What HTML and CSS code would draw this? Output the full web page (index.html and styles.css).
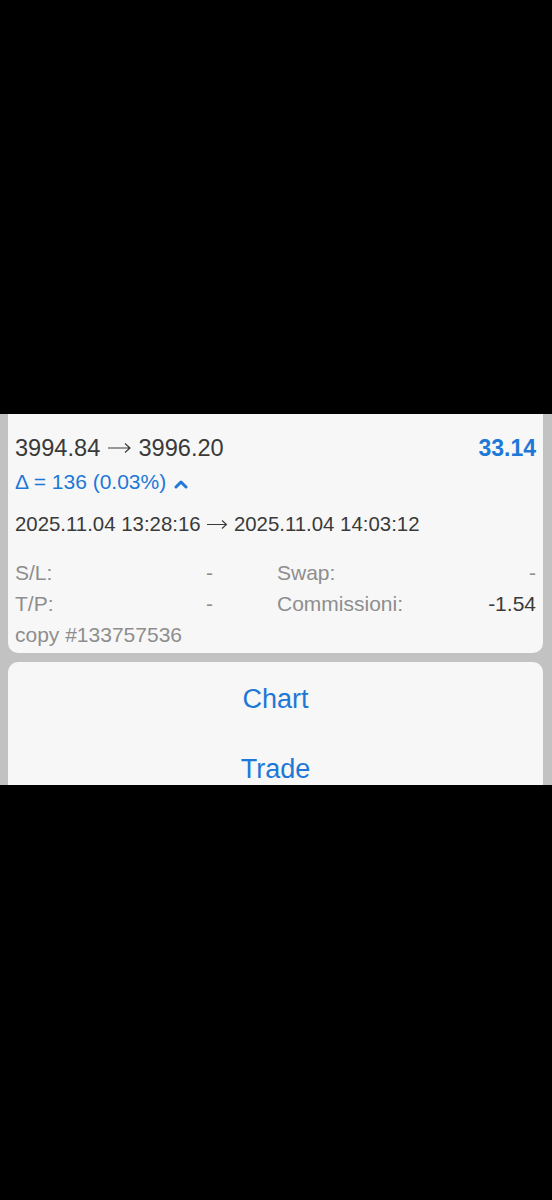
FILE: index.html
```html
<!DOCTYPE html>
<html lang="it">
<head>
    <meta charset="UTF-8">
    <meta name="viewport" content="width=device-width, initial-scale=1.0">
    <title>Posizione</title>
    <link rel="stylesheet" href="styles.css">
</head>
<body>
    <div class="top-space"></div>

    <div class="sheet">
        <!-- dettagli della posizione -->
        <div class="card details">
            <div class="row-price">
                <span class="prices">3994.84
                    <svg class="arrow" width="25" height="12" viewBox="0 0 25 12">
                        <path d="M1 6H23M18 1.5L23 6L18 10.5" fill="none" stroke="#3a3a3a" stroke-width="1.2"/>
                    </svg>
                    3996.20</span>
                <span class="profit">33.14</span>
            </div>
            <div class="delta">
                &Delta; = 136 (0.03%)
                <svg class="caret" width="14" height="10" viewBox="0 0 14 10">
                    <polyline points="2,8 7,3 12,8" fill="none" stroke="#1e78d8" stroke-width="3" stroke-linecap="round" stroke-linejoin="round"/>
                </svg>
            </div>
            <div class="times">2025.11.04 13:28:16
                <svg class="arrow small" width="22" height="11" viewBox="0 0 22 11">
                    <path d="M1 5.5H20.5M16 1.5L20.5 5.5L16 9.5" fill="none" stroke="#3a3a3a" stroke-width="1.1"/>
                </svg>
                2025.11.04 14:03:12</div>

            <div class="info">
                <span class="label">S/L:</span><span class="value">-</span>
                <span class="label">Swap:</span><span class="value">-</span>
                <span class="label">T/P:</span><span class="value">-</span>
                <span class="label">Commissioni:</span><span class="value dark">-1.54</span>
            </div>
            <div class="comment">copy #133757536</div>
        </div>

        <!-- azioni -->
        <div class="card actions">
            <div class="action">Chart</div>
            <div class="action">Trade</div>
        </div>
    </div>
</body>
</html>
```

FILE: styles.css
```css
body {
    margin: 0;
    background-color: #000;
    font-family: 'Liberation Sans', Arial, sans-serif;
}

.top-space {
    height: 414px;
}

.sheet {
    height: 371px;
    overflow: hidden;
    background-color: #c2c2c2;
    padding: 0 9px 0 8px;
}

.card {
    background-color: #f7f7f7;
}

.details {
    border-radius: 0 0 10px 10px;
    padding: 20px 7px 3px 7px;
}

.row-price {
    display: flex;
    justify-content: space-between;
    align-items: center;
    line-height: 28px;
}

.prices {
    font-size: 23.6px;
    color: #3a3a3a;
}

.arrow {
    vertical-align: 2px;
}

.arrow.small {
    vertical-align: 1px;
}

.profit {
    font-size: 23px;
    font-weight: bold;
    color: #1e78d8;
}

.delta {
    font-size: 21px;
    line-height: 28px;
    color: #1e78d8;
    margin-top: 6px;
}

.caret {
    margin-left: 2px;
}

.times {
    font-size: 20.4px;
    line-height: 28px;
    color: #3a3a3a;
    margin-top: 14px;
}

.info {
    display: grid;
    grid-template-columns: 150px 48px 1fr 1fr;
    margin-top: 19px;
    font-size: 21px;
    line-height: 31px;
    color: #8e8e8e;
}

.info .value {
    text-align: right;
}

.info .label:nth-child(3),
.info .label:nth-child(7) {
    padding-left: 64px;
}

.value.dark {
    color: #3a3a3a;
}

.comment {
    font-size: 21px;
    line-height: 31px;
    color: #8e8e8e;
}

.actions {
    margin-top: 9px;
    border-radius: 10px 10px 0 0;
    padding-top: 2px;
}

.action {
    height: 70px;
    line-height: 70px;
    text-align: center;
    font-size: 27px;
    color: #1e78d8;
}
```
